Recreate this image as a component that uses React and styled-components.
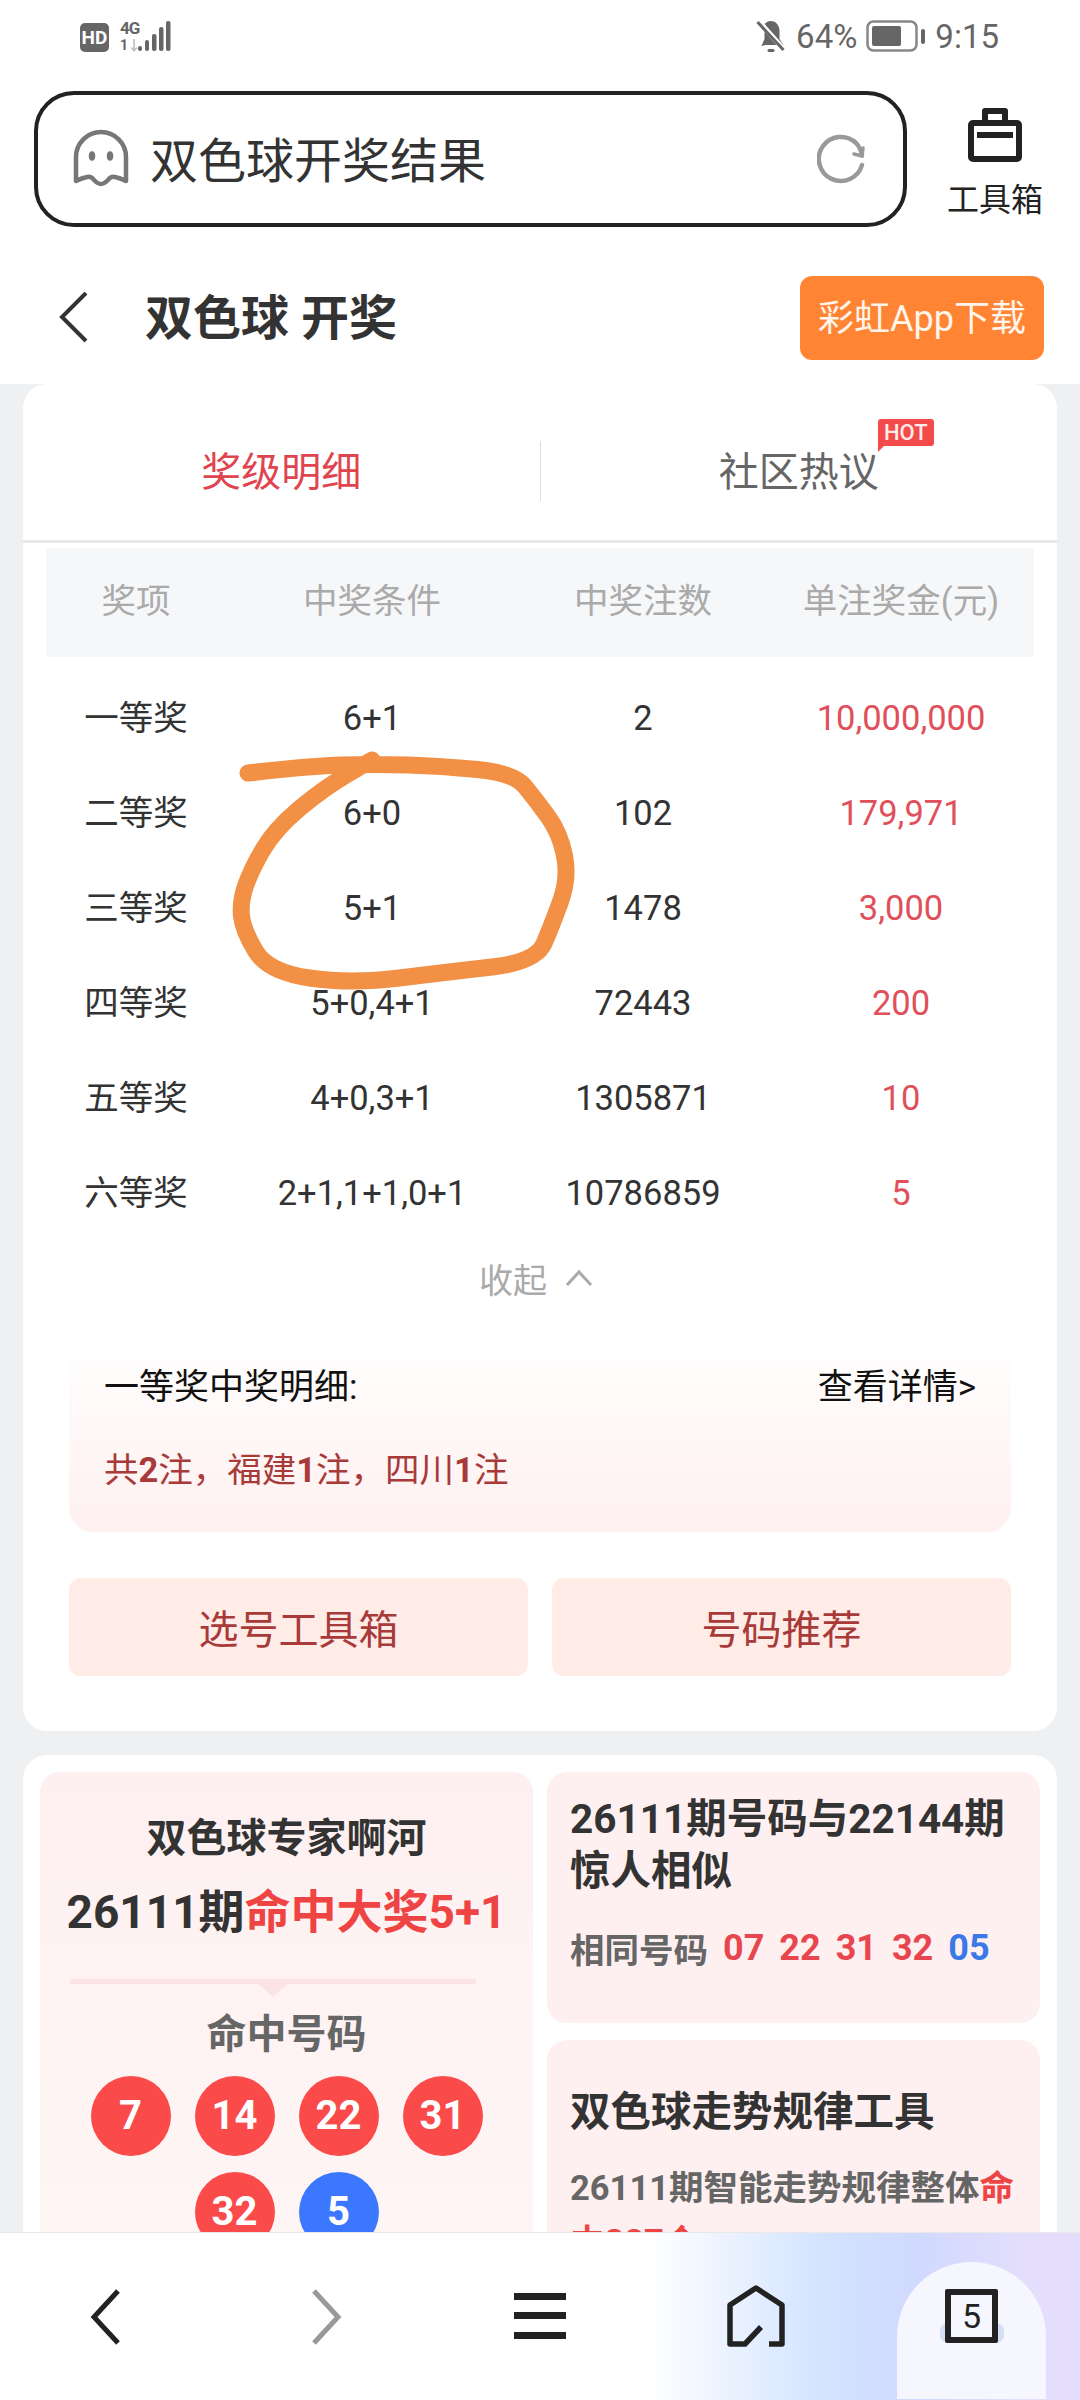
import React from "react";
import styled, { createGlobalStyle } from "styled-components";

const GlobalStyle = createGlobalStyle`
    html, body {
        margin: 0;
        padding: 0;
        background: #eef0f2;
    }
    * {
        box-sizing: border-box;
    }
`;

const Page = styled.div`
    position: relative;
    width: 1080px;
    height: 2400px;
    overflow: hidden;
    background: #eef0f2;
    font-family: Roboto, "Noto Sans CJK SC", sans-serif;
    color: #333;
`;

const TopArea = styled.div`
    background: #fff;
    height: 384px;
`;

const StatusBar = styled.div`
    height: 91px;
    padding: 20px 81px 0 80px;
    display: flex;
    justify-content: space-between;
    align-items: flex-start;
    color: #666;
`;

const StatusGroup = styled.div`
    display: flex;
    align-items: center;
    gap: ${(props) => props.$gap || 10}px;
    height: 32px;
`;

const HdBadge = styled.span`
    width: 29px;
    height: 29px;
    margin-top: 3px;
    border-radius: 5px;
    background: #666;
    color: #fff;
    font-size: 19px;
    font-weight: 700;
    line-height: 29px;
    text-align: center;
`;

const NetGroup = styled.div`
    display: flex;
    align-items: flex-start;
    height: 32px;
`;

const NetLabels = styled.div`
    display: flex;
    flex-direction: column;
    width: 18px;
    font-weight: 700;
`;

const NetType = styled.span`
    font-size: 17px;
    line-height: 16px;
    letter-spacing: -1px;
`;

const NetSpeed = styled.span`
    margin-top: 2px;
    font-size: 14px;
    line-height: 14px;
    white-space: nowrap;
    letter-spacing: -1px;
`;

const NetArrow = styled.span`
    color: #bbb;
`;

const StatusText = styled.span`
    margin-top: 2px;
    font-size: 33px;
    line-height: 32px;
    color: #666;
`;

const SearchRow = styled.div`
    display: flex;
    padding: 0 36px 0 34px;
    justify-content: space-between;
`;

const SearchBox = styled.div`
    width: 873px;
    height: 136px;
    padding: 0 38px 0 35px;
    border: 4px solid #222;
    border-radius: 40px;
    display: flex;
    align-items: center;
`;

const SearchText = styled.span`
    margin-left: 21px;
    padding-bottom: 5px;
    font-size: 48px;
    color: #333;
    flex: 1;
`;

const ToolBox = styled.div`
    width: 98px;
    padding-top: 17px;
    display: flex;
    flex-direction: column;
    align-items: center;
`;

const ToolLabel = styled.span`
    margin-top: 20px;
    font-size: 32px;
    line-height: 36px;
    color: #222;
`;

const HeaderRow = styled.div`
    display: flex;
    align-items: center;
    padding: 49px 36px 0 58px;
`;

const PageTitle = styled.h1`
    margin: 0 0 0 55px;
    padding-bottom: 9px;
    flex: 1;
    font-size: 48px;
    font-weight: 700;
    color: #333;
`;

const DownloadButton = styled.button`
    width: 244px;
    height: 84px;
    border: none;
    border-radius: 12px;
    background: #ff8534;
    color: #fff5ec;
    font-family: inherit;
    font-size: 36px;
    padding: 0 0 6px;
`;

const Content = styled.div`
    padding: 0 23px;
`;

const Card = styled.section`
    background: #fff;
    border-radius: 24px;
    margin-bottom: 24px;
    padding-bottom: ${(props) => props.$bottom || 0}px;
`;

const TabRow = styled.div`
    height: 159px;
    padding-top: 18px;
    display: flex;
    align-items: center;
    border-bottom: 3px solid #e9e9e9;
`;

const Tab = styled.div`
    position: relative;
    flex: 1;
    height: 60px;
    padding-bottom: 4px;
    display: flex;
    justify-content: center;
    align-items: center;
    font-size: 40px;
    color: ${(props) => (props.$active ? "#e0454f" : "#666")};
    & + & {
        border-left: 1px solid #ddd;
    }
`;

const TabLabel = styled.span`
    position: relative;
`;

const HotBadge = styled.span`
    position: absolute;
    left: 159px;
    top: -21px;
    width: 56px;
    height: 27px;
    border-radius: 3px 3px 3px 0;
    background: #f34a4a;
    color: #ffe9e9;
    font-size: 22px;
    font-weight: 500;
    line-height: 27px;
    text-align: center;
    &::after {
        content: "";
        position: absolute;
        left: 0;
        top: 27px;
        border-top: 6px solid #f34a4a;
        border-right: 6px solid transparent;
    }
`;

const TableGrid = styled.div`
    display: grid;
    grid-template-columns: 180px 292px 250px 266px;
    margin: 0 23px;
    align-items: center;
    text-align: center;
`;

const TableHead = styled(TableGrid)`
    margin-top: 5px;
    margin-bottom: 13px;
    height: 109px;
    padding-bottom: 10px;
    background: #f6f7f9;
    font-size: 34.5px;
    color: #aaa;
`;

const TableRow = styled(TableGrid)`
    height: 95px;
    font-size: 34.5px;
    color: #333;
`;

const RowLabel = styled.span`
    padding-bottom: 5px;
`;

const PrizeCell = styled.span`
    color: #e0505a;
`;

const Collapse = styled.div`
    display: flex;
    justify-content: center;
    align-items: center;
    gap: 18px;
    height: 50px;
    margin-top: 13px;
    padding-right: 8px;
    font-size: 34px;
    color: #aaa;
`;

const DetailBox = styled.div`
    margin: 29px 46px 0;
    height: 200px;
    padding: 29px 35px 0;
    border-radius: 0 0 24px 24px;
    background: linear-gradient(180deg, #ffffff 0%, #fff0f0 100%);
`;

const DetailHead = styled.div`
    display: flex;
    justify-content: space-between;
    font-size: 35px;
    line-height: 54px;
    color: #111;
`;

const DetailText = styled.div`
    margin-top: 28px;
    font-size: 34.5px;
    line-height: 54px;
    color: #a83a3a;
    b {
        font-weight: 700;
    }
`;

const ActionRow = styled.div`
    display: grid;
    grid-template-columns: 1fr 1fr;
    gap: 24px;
    margin: 46px 46px 0;
`;

const ActionButton = styled.button`
    height: 98px;
    border: none;
    border-radius: 12px;
    background: #ffece6;
    color: #a83a3a;
    font-family: inherit;
    font-size: 40px;
    padding: 0;
`;

const PromoGrid = styled.div`
    display: grid;
    grid-template-columns: 493px 493px;
    gap: 14px;
    padding: 17px;
`;

const Panel = styled.div`
    border-radius: 20px;
    background: #fef0f0;
`;

const LeftPanel = styled(Panel)`
    height: 560px;
    padding-top: 41px;
    text-align: center;
    background: linear-gradient(180deg, #fef0f0 0%, #fff6f6 100%);
`;

const RightColumn = styled.div`
    display: flex;
    flex-direction: column;
    gap: 17px;
`;

const ExpertName = styled.div`
    font-size: 40px;
    font-weight: 700;
    line-height: 52px;
`;

const HitTitle = styled.div`
    margin-top: 17px;
    font-size: 46px;
    font-weight: 700;
    line-height: 60px;
    white-space: nowrap;
    em {
        font-style: normal;
        color: #ee4444;
    }
`;

const NotchDivider = styled.div`
    position: relative;
    height: 5px;
    margin: 37px 57px 0 30px;
    background: #fce4e4;
    &::after {
        content: "";
        position: absolute;
        left: 188px;
        top: 5px;
        border-top: 13px solid #fce4e4;
        border-left: 15px solid transparent;
        border-right: 15px solid transparent;
    }
`;

const HitLabel = styled.div`
    margin-top: 25px;
    font-size: 40px;
    font-weight: 700;
    line-height: 52px;
    color: #666;
`;

const BallWrap = styled.div`
    display: flex;
    flex-wrap: wrap;
    justify-content: center;
    gap: 16px 24px;
    width: 392px;
    margin: 15px auto 0;
`;

const Ball = styled.span`
    width: 80px;
    height: 80px;
    border-radius: 50%;
    background: ${(props) => (props.$blue ? "#3b78ff" : "#fa4a4a")};
    color: #fff;
    font-size: 40px;
    font-weight: 700;
    line-height: 80px;
`;

const InfoPanel = styled(Panel)`
    height: ${(props) => props.$height}px;
    padding: ${(props) => props.$top}px 18px 0 23px;
`;

const InfoTitle = styled.div`
    font-size: 40.5px;
    font-weight: 700;
    line-height: 52px;
    color: #333;
`;

const SameRow = styled.div`
    display: flex;
    align-items: center;
    margin-top: 29px;
    height: 44px;
    font-size: 34.5px;
    font-weight: 700;
    color: #666;
`;

const SameNumbers = styled.span`
    display: flex;
    gap: 15px;
    margin-left: 15px;
    font-size: 36px;
    font-weight: 700;
`;

const SameNumber = styled.span`
    color: ${(props) => (props.$blue ? "#3b78e8" : "#e8464e")};
`;

const InfoText = styled.div`
    margin-top: 23px;
    font-size: 34.5px;
    font-weight: 700;
    line-height: 54px;
    color: #666;
`;

const InfoHit = styled.div`
    color: #ee4444;
`;

const InfoHitStart = styled.span`
    color: #ee4444;
`;

const Annotation = styled.svg`
    position: absolute;
    left: 0;
    top: 0;
    pointer-events: none;
`;

const BottomNav = styled.nav`
    position: absolute;
    left: 0;
    right: 0;
    top: 2232px;
    height: 168px;
    padding-top: 30px;
    border-top: 1px solid #e8e8e8;
    background:
        linear-gradient(205deg, rgba(255, 255, 255, 0) 52%, #fff 82%),
        linear-gradient(90deg, #fff 60%, #d3e4ff 76%, #d0d9ff 85%, #e4defc 95%);
`;

const NavHump = styled.div`
    position: absolute;
    left: 897px;
    top: 29px;
    width: 149px;
    height: 137px;
    border-radius: 75px 75px 0 0;
    background: #f6f6ff;
`;

const NavIcon = styled.span`
    position: absolute;
    left: ${(props) => props.$x}px;
    top: ${(props) => props.$y}px;
    display: block;
    line-height: 0;
`;

const TabCountShade = styled.span`
    position: absolute;
    left: 940px;
    top: 90px;
    width: 64px;
    height: 20px;
    border-radius: 8px;
    background: #d4dff5;
`;

const TabCount = styled.span`
    position: absolute;
    left: 945px;
    top: 56px;
    width: 53px;
    height: 54px;
    border: 6px solid #222;
    border-radius: 2px;
    background: #f6f6ff;
    color: #222;
    font-size: 34px;
    line-height: 42px;
    text-align: center;
`;

const rows = [
    ["一等奖", "6+1", "2", "10,000,000"],
    ["二等奖", "6+0", "102", "179,971"],
    ["三等奖", "5+1", "1478", "3,000"],
    ["四等奖", "5+0,4+1", "72443", "200"],
    ["五等奖", "4+0,3+1", "1305871", "10"],
    ["六等奖", "2+1,1+1,0+1", "10786859", "5"],
];

const circlePoints = [
    [248, 773], [310, 766], [375, 764], [441, 766], [514, 773], [536, 800],
    [560, 833], [569, 878], [552, 925], [536, 962], [448, 972], [351, 984],
    [268, 972], [243, 930], [240, 902], [251, 870], [275, 829], [324, 788], [372, 760],
];

// smooth the hand drawn ring through the midpoints
function ringPath(points) {
    let d = `M${points[0][0]} ${points[0][1]}`;
    for (let i = 1; i < points.length - 1; i++) {
        const midX = (points[i][0] + points[i + 1][0]) / 2;
        const midY = (points[i][1] + points[i + 1][1]) / 2;
        d += ` Q${points[i][0]} ${points[i][1]} ${midX} ${midY}`;
    }
    const last = points[points.length - 1];
    return `${d} L${last[0]} ${last[1]}`;
}

function SignalBars() {
    return (
        <svg width="34" height="32" viewBox="0 0 34 32" fill="#666">
            <rect x="0" y="26" width="4" height="5" rx="2" />
            <rect x="7" y="20" width="4" height="11" rx="2" />
            <rect x="14" y="14" width="4.500" height="17" rx="2" />
            <rect x="21" y="7" width="4.500" height="24" rx="2" />
            <rect x="28" y="1" width="4.500" height="30" rx="2" />
        </svg>
    );
}

function MutedBell() {
    return (
        <svg width="31" height="34" viewBox="0 0 30 34" fill="#666">
            <path d="M14 2c6 0 9 5 9 10v8l4 6H9L5 27l3-7v-8c0-2 .5-4 1.500-5L8 5c2-2 4-3 6-3z" />
            <rect x="11" y="30" width="7" height="3" rx="1.500" />
            <path d="M2 2l26 29" stroke="#fff" strokeWidth="5" />
            <path d="M1 3l26 28" stroke="#666" strokeWidth="3" />
        </svg>
    );
}

function Battery() {
    return (
        <svg width="60" height="32" viewBox="0 0 60 32" fill="none">
            <rect x="1.500" y="1.500" width="49" height="29" rx="6" stroke="#888" strokeWidth="2.500" />
            <rect x="6" y="6" width="29" height="20" rx="2" fill="#666" />
            <rect x="55" y="9" width="4" height="15" rx="2" fill="#666" />
        </svg>
    );
}

function Ghost() {
    return (
        <svg width="56" height="60" viewBox="0 0 56 60" fill="none" stroke="#777" strokeWidth="4.500" strokeLinejoin="round" strokeLinecap="round">
            <path d="M3 52V28a25 25 0 0 1 50 0v24q-6-3-11-4q-4-1-7 3q-4 4-7 4q-3 0-7-4q-3-4-7-3q-5 1-11 4z" />
            <ellipse cx="19" cy="27" rx="1" ry="2.500" fill="#777" />
            <ellipse cx="37" cy="27" rx="1" ry="2.500" fill="#777" />
        </svg>
    );
}

function Refresh() {
    return (
        <svg width="48" height="50" viewBox="0 0 48 50" fill="none" stroke="#999" strokeWidth="4.500" strokeLinecap="round">
            <path d="M45 31A22 22 0 1 1 39 9c3 3 5 7 6 12" />
            <path d="M37 20l8 2 1-8" strokeWidth="3.500" />
        </svg>
    );
}

function ToolBag() {
    return (
        <svg width="54" height="54" viewBox="0 0 54 54" fill="none" stroke="#222" strokeWidth="6" strokeLinejoin="round">
            <path d="M17 15V3h20v12" />
            <rect x="3" y="15" width="48" height="36" rx="2" />
            <path d="M9 27h36" />
        </svg>
    );
}

function Chevron({ points, color = "#333", width = 4, w = 32, h = 52 }) {
    return (
        <svg width={w} height={h} viewBox={`0 0 ${w} ${h}`} fill="none" stroke={color} strokeWidth={width} strokeLinejoin="miter">
            <polyline points={points} />
        </svg>
    );
}

export default function App() {
    return (
        <Page>
            <GlobalStyle />
            <TopArea>
                <StatusBar>
                    <StatusGroup $gap={11}>
                        <HdBadge>HD</HdBadge>
                        <NetGroup>
                            <NetLabels>
                                <NetType>4G</NetType>
                                <NetSpeed>
                                    1<NetArrow>↓</NetArrow>
                                </NetSpeed>
                            </NetLabels>
                            <SignalBars />
                        </NetGroup>
                    </StatusGroup>
                    <StatusGroup $gap={9}>
                        <MutedBell />
                        <StatusText>64%</StatusText>
                        <Battery />
                        <StatusText>9:15</StatusText>
                    </StatusGroup>
                </StatusBar>
                <SearchRow>
                    <SearchBox>
                        <Ghost />
                        <SearchText>双色球开奖结果</SearchText>
                        <Refresh />
                    </SearchBox>
                    <ToolBox>
                        <ToolBag />
                        <ToolLabel>工具箱</ToolLabel>
                    </ToolBox>
                </SearchRow>
                <HeaderRow>
                    <Chevron points="28,1 4,25 28,49" />
                    <PageTitle>双色球 开奖</PageTitle>
                    <DownloadButton>彩虹App下载</DownloadButton>
                </HeaderRow>
            </TopArea>
            <Content>
                <Card $bottom={55}>
                    <TabRow>
                        <Tab $active>奖级明细</Tab>
                        <Tab>
                            <TabLabel>
                                社区热议
                                <HotBadge>HOT</HotBadge>
                            </TabLabel>
                        </Tab>
                    </TabRow>
                    <TableHead>
                        <span>奖项</span>
                        <span>中奖条件</span>
                        <span>中奖注数</span>
                        <span>单注奖金(元)</span>
                    </TableHead>
                    {rows.map((row) => (
                        <TableRow key={row[0]}>
                            <RowLabel>{row[0]}</RowLabel>
                            <span>{row[1]}</span>
                            <span>{row[2]}</span>
                            <PrizeCell>{row[3]}</PrizeCell>
                        </TableRow>
                    ))}
                    <Collapse>
                        收起
                        <Chevron points="2,16 14,3 26,16" color="#aaa" width={3} w={28} h={18} />
                    </Collapse>
                    <DetailBox>
                        <DetailHead>
                            <span>一等奖中奖明细:</span>
                            <span>查看详情&gt;</span>
                        </DetailHead>
                        <DetailText>
                            共<b>2</b>注，福建<b>1</b>注，四川<b>1</b>注
                        </DetailText>
                    </DetailBox>
                    <ActionRow>
                        <ActionButton>选号工具箱</ActionButton>
                        <ActionButton>号码推荐</ActionButton>
                    </ActionRow>
                </Card>
                <Card>
                    <PromoGrid>
                        <LeftPanel>
                            <ExpertName>双色球专家啊河</ExpertName>
                            <HitTitle>
                                26111期<em>命中大奖5+1</em>
                            </HitTitle>
                            <NotchDivider />
                            <HitLabel>命中号码</HitLabel>
                            <BallWrap>
                                <Ball>7</Ball>
                                <Ball>14</Ball>
                                <Ball>22</Ball>
                                <Ball>31</Ball>
                                <Ball>32</Ball>
                                <Ball $blue>5</Ball>
                            </BallWrap>
                        </LeftPanel>
                        <RightColumn>
                            <InfoPanel $height={251} $top={21}>
                                <InfoTitle>26111期号码与22144期惊人相似</InfoTitle>
                                <SameRow>
                                    相同号码
                                    <SameNumbers>
                                        <SameNumber>07</SameNumber>
                                        <SameNumber>22</SameNumber>
                                        <SameNumber>31</SameNumber>
                                        <SameNumber>32</SameNumber>
                                        <SameNumber $blue>05</SameNumber>
                                    </SameNumbers>
                                </SameRow>
                            </InfoPanel>
                            <InfoPanel $height={290} $top={46}>
                                <InfoTitle>双色球走势规律工具</InfoTitle>
                                <InfoText>
                                    26111期智能走势规律整体<InfoHitStart>命</InfoHitStart>
                                    <InfoHit>中287个</InfoHit>
                                </InfoText>
                            </InfoPanel>
                        </RightColumn>
                    </PromoGrid>
                </Card>
            </Content>
            <Annotation width="1080" height="2400" viewBox="0 0 1080 2400" fill="none">
                <path d={ringPath(circlePoints)} stroke="#f29045" strokeWidth="17" strokeLinecap="round" strokeLinejoin="round" />
            </Annotation>
            <BottomNav>
                <NavHump />
                <NavIcon $x={88} $y={56}>
                    <Chevron points="30,2 6,28 30,54" color="#222" width={5} w={34} h={56} />
                </NavIcon>
                <NavIcon $x={310} $y={56}>
                    <Chevron points="4,2 28,28 4,54" color="#999" width={5} w={34} h={56} />
                </NavIcon>
                <NavIcon $x={514} $y={60}>
                    <svg width="52" height="46" viewBox="0 0 52 46" fill="#222">
                        <rect width="52" height="7" />
                        <rect y="19" width="52" height="7" />
                        <rect y="39" width="52" height="7" />
                    </svg>
                </NavIcon>
                <NavIcon $x={727} $y={52}>
                    <svg width="58" height="62" viewBox="0 0 58 62" fill="none" stroke="#222" strokeWidth="5.500" strokeLinejoin="round">
                        <path d="M34 42L18 59H3V20L29 3l26 17v39H42" />
                    </svg>
                </NavIcon>
                <TabCountShade />
                <TabCount>5</TabCount>
            </BottomNav>
        </Page>
    );
}
